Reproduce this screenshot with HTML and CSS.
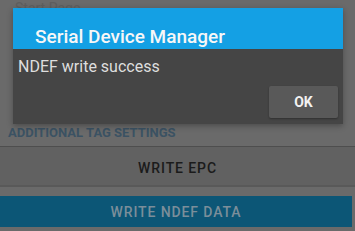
FILE: index.html
```html
<!DOCTYPE html>
<html>
<head>
  <meta charset="UTF-8">
  <title>Serial Device Manager</title>
  <link rel="stylesheet" href="styles.css">
</head>
<body>
  <div class="page">
    <div class="page-title">Start Page</div>
    <div class="page-filler"></div>

    <div class="section-label">ADDITIONAL TAG SETTINGS</div>
    <button class="btn btn-epc">WRITE EPC</button>
    <div class="btn-gap"></div>
    <button class="btn btn-ndef">WRITE NDEF DATA</button>
  </div>

  <div class="dialog">
    <div class="dialog-title">Serial Device Manager</div>
    <div class="dialog-message">NDEF write success</div>
    <div class="dialog-actions">
      <button class="dialog-ok">OK</button>
    </div>
  </div>
</body>
</html>
```

FILE: styles.css
```css
body {
  margin: 0;
  width: 355px;
  height: 231px;
  overflow: hidden;
  background: #6a6a6a;
  font-family: Roboto, "Noto Sans", sans-serif;
  position: relative;
}

.page {
  display: flex;
  flex-direction: column;
  height: 231px;
}

.page-title {
  height: 16px;
  line-height: 16px;
  padding-left: 15px;
  font-size: 14px;
  color: #5e5e5e;
}

.page-filler {
  height: 110px;      /* content hidden under the dialog */
}

.section-label {
  padding-left: 8px;
  font-size: 13px;
  line-height: 14px;
  font-weight: 700;
  color: #3b5263;
  margin-bottom: 6px;
}

.btn {
  border: none;
  margin: 0;
  width: 100%;
  font-family: Roboto, "Noto Sans", sans-serif;
  font-size: 14px;
  font-weight: 500;
  letter-spacing: 0.9px;
  padding: 0;
}

.btn-epc {
  height: 39px;
  padding-top: 4px;
  border-top: 1px solid #4e4e4e;
  background: #616161;
  color: #1b1b1b;
  box-shadow: 0 2px 0 #595959;
}

.btn-gap {
  height: 11px;
}

.btn-ndef {
  height: 31px;
  width: 352px;
  padding-top: 1px;
  background: #0c5676;
  color: #7b8e9a;
}

/* 对话框 */
.dialog {
  position: absolute;
  top: 8px;
  left: 13px;
  width: 330px;
  height: 116px;
  background: #454545;
  box-shadow: 0 2px 6px rgba(0, 0, 0, 0.3);
}

.dialog-title {
  height: 20px;
  padding: 19px 0 2px 22px;
  background: #14a0e4;
  color: #f7f7f7;
  font-size: 19px;
  line-height: 20px;
  font-weight: 500;
}

.dialog-message {
  padding: 8px 0 0 5px;
  font-size: 16px;
  line-height: 19px;
  color: #dedede;
}

.dialog-actions {
  display: flex;
  justify-content: flex-end;
  padding: 10px 5px 0 0;
}

.dialog-ok {
  width: 69px;
  height: 32px;
  border: none;
  border-radius: 2px;
  background: #595959;
  color: #f2f2f2;
  font-family: Roboto, "Noto Sans", sans-serif;
  font-size: 14px;
  font-weight: 700;
  box-shadow: 0 1px 2px rgba(0, 0, 0, 0.3);
}
```
